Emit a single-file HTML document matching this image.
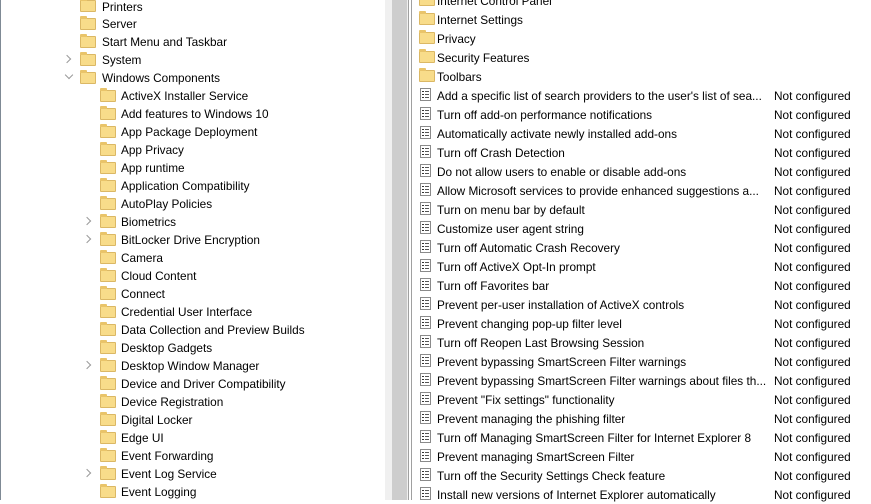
<!DOCTYPE html>
<html><head><meta charset="utf-8"><style>
body{margin:0;width:871px;height:500px;overflow:hidden;background:#fff;font-family:"Liberation Sans",sans-serif;font-size:11.8px;color:#000;position:relative}
.r{position:absolute;height:18px;line-height:18px;white-space:nowrap;margin-top:1px}
.f{position:absolute;width:16px;height:12px;background:#f8dc8a;border:1px solid #dbb865;box-sizing:border-box;border-radius:1px}
.f:before{content:"";position:absolute;left:-1px;top:-3px;width:7px;height:3px;background:#e9c46a;border-radius:1px 1px 0 0}
.d{position:absolute;width:11px;height:13px;border:1px solid #8a8a8a;box-sizing:border-box;background:#fff}
.d:before{content:"";position:absolute;left:1px;top:2px;width:2px;height:7px;background:repeating-linear-gradient(#333 0 1px,transparent 1px 3px)}
.d:after{content:"";position:absolute;left:4px;top:2px;width:4px;height:7px;background:repeating-linear-gradient(#555 0 1px,transparent 1px 3px)}
.c{position:absolute;width:5px;height:5px;border-right:1px solid #9a9a9a;border-bottom:1px solid #9a9a9a}
.s{position:absolute;left:774px}
</style></head><body>
<div style="position:absolute;left:0;top:0;width:1px;height:500px;background:#7f8a95"></div>
<div style="position:absolute;left:385px;top:0;width:23px;height:500px;background:#f0f0f0"></div>
<div style="position:absolute;left:392px;top:0;width:15px;height:500px;background:#cdcdcd"></div>
<div style="position:absolute;left:408px;top:0;width:1px;height:500px;background:#a0a0a0"></div>
<div style="position:absolute;left:411px;top:0;width:1px;height:500px;background:#a0a0a0"></div>

<div class="f" style="left:80px;top:0px"></div><div class="r" style="left:102px;top:-3px">Printers</div>
<div class="f" style="left:80px;top:18px"></div><div class="r" style="left:102px;top:14px">Server</div>
<div class="f" style="left:80px;top:36px"></div><div class="r" style="left:102px;top:32px">Start Menu and Taskbar</div>
<div class="c" style="left:64px;top:56px;transform:rotate(-45deg)"></div>
<div class="f" style="left:80px;top:54px"></div><div class="r" style="left:102px;top:50px">System</div>
<div class="c" style="left:66px;top:72px;transform:rotate(45deg)"></div>
<div class="f" style="left:80px;top:72px"></div><div class="r" style="left:102px;top:68px">Windows Components</div>

<div class="f" style="left:100px;top:90px"></div><div class="r" style="left:121px;top:86px">ActiveX Installer Service</div>
<div class="f" style="left:100px;top:108px"></div><div class="r" style="left:121px;top:104px">Add features to Windows 10</div>
<div class="f" style="left:100px;top:126px"></div><div class="r" style="left:121px;top:122px">App Package Deployment</div>
<div class="f" style="left:100px;top:144px"></div><div class="r" style="left:121px;top:140px">App Privacy</div>
<div class="f" style="left:100px;top:162px"></div><div class="r" style="left:121px;top:158px">App runtime</div>
<div class="f" style="left:100px;top:180px"></div><div class="r" style="left:121px;top:176px">Application Compatibility</div>
<div class="f" style="left:100px;top:198px"></div><div class="r" style="left:121px;top:194px">AutoPlay Policies</div>
<div class="c" style="left:84px;top:218px;transform:rotate(-45deg)"></div>
<div class="f" style="left:100px;top:216px"></div><div class="r" style="left:121px;top:212px">Biometrics</div>
<div class="c" style="left:84px;top:236px;transform:rotate(-45deg)"></div>
<div class="f" style="left:100px;top:234px"></div><div class="r" style="left:121px;top:230px">BitLocker Drive Encryption</div>
<div class="f" style="left:100px;top:252px"></div><div class="r" style="left:121px;top:248px">Camera</div>
<div class="f" style="left:100px;top:270px"></div><div class="r" style="left:121px;top:266px">Cloud Content</div>
<div class="f" style="left:100px;top:288px"></div><div class="r" style="left:121px;top:284px">Connect</div>
<div class="f" style="left:100px;top:306px"></div><div class="r" style="left:121px;top:302px">Credential User Interface</div>
<div class="f" style="left:100px;top:324px"></div><div class="r" style="left:121px;top:320px">Data Collection and Preview Builds</div>
<div class="f" style="left:100px;top:342px"></div><div class="r" style="left:121px;top:338px">Desktop Gadgets</div>
<div class="c" style="left:84px;top:362px;transform:rotate(-45deg)"></div>
<div class="f" style="left:100px;top:360px"></div><div class="r" style="left:121px;top:356px">Desktop Window Manager</div>
<div class="f" style="left:100px;top:378px"></div><div class="r" style="left:121px;top:374px">Device and Driver Compatibility</div>
<div class="f" style="left:100px;top:396px"></div><div class="r" style="left:121px;top:392px">Device Registration</div>
<div class="f" style="left:100px;top:414px"></div><div class="r" style="left:121px;top:410px">Digital Locker</div>
<div class="f" style="left:100px;top:432px"></div><div class="r" style="left:121px;top:428px">Edge UI</div>
<div class="f" style="left:100px;top:450px"></div><div class="r" style="left:121px;top:446px">Event Forwarding</div>
<div class="c" style="left:84px;top:470px;transform:rotate(-45deg)"></div>
<div class="f" style="left:100px;top:468px"></div><div class="r" style="left:121px;top:464px">Event Log Service</div>
<div class="f" style="left:100px;top:486px"></div><div class="r" style="left:121px;top:482px">Event Logging</div>

<div class="f" style="left:419px;top:-6px"></div><div class="r" style="left:437px;top:-9px">Internet Control Panel</div>
<div class="f" style="left:419px;top:13px"></div><div class="r" style="left:437px;top:10px">Internet Settings</div>
<div class="f" style="left:419px;top:32px"></div><div class="r" style="left:437px;top:29px">Privacy</div>
<div class="f" style="left:419px;top:51px"></div><div class="r" style="left:437px;top:48px">Security Features</div>
<div class="f" style="left:419px;top:70px"></div><div class="r" style="left:437px;top:67px">Toolbars</div>

<div class="d" style="left:420px;top:88px"></div><div class="r" style="left:437px;top:86px">Add a specific list of search providers to the user's list of sea...</div><div class="r s" style="top:86px">Not configured</div>
<div class="d" style="left:420px;top:107px"></div><div class="r" style="left:437px;top:105px">Turn off add-on performance notifications</div><div class="r s" style="top:105px">Not configured</div>
<div class="d" style="left:420px;top:126px"></div><div class="r" style="left:437px;top:124px">Automatically activate newly installed add-ons</div><div class="r s" style="top:124px">Not configured</div>
<div class="d" style="left:420px;top:145px"></div><div class="r" style="left:437px;top:143px">Turn off Crash Detection</div><div class="r s" style="top:143px">Not configured</div>
<div class="d" style="left:420px;top:164px"></div><div class="r" style="left:437px;top:162px">Do not allow users to enable or disable add-ons</div><div class="r s" style="top:162px">Not configured</div>
<div class="d" style="left:420px;top:183px"></div><div class="r" style="left:437px;top:181px">Allow Microsoft services to provide enhanced suggestions a...</div><div class="r s" style="top:181px">Not configured</div>
<div class="d" style="left:420px;top:202px"></div><div class="r" style="left:437px;top:200px">Turn on menu bar by default</div><div class="r s" style="top:200px">Not configured</div>
<div class="d" style="left:420px;top:221px"></div><div class="r" style="left:437px;top:219px">Customize user agent string</div><div class="r s" style="top:219px">Not configured</div>
<div class="d" style="left:420px;top:240px"></div><div class="r" style="left:437px;top:238px">Turn off Automatic Crash Recovery</div><div class="r s" style="top:238px">Not configured</div>
<div class="d" style="left:420px;top:259px"></div><div class="r" style="left:437px;top:257px">Turn off ActiveX Opt-In prompt</div><div class="r s" style="top:257px">Not configured</div>
<div class="d" style="left:420px;top:278px"></div><div class="r" style="left:437px;top:276px">Turn off Favorites bar</div><div class="r s" style="top:276px">Not configured</div>
<div class="d" style="left:420px;top:297px"></div><div class="r" style="left:437px;top:295px">Prevent per-user installation of ActiveX controls</div><div class="r s" style="top:295px">Not configured</div>
<div class="d" style="left:420px;top:316px"></div><div class="r" style="left:437px;top:314px">Prevent changing pop-up filter level</div><div class="r s" style="top:314px">Not configured</div>
<div class="d" style="left:420px;top:335px"></div><div class="r" style="left:437px;top:333px">Turn off Reopen Last Browsing Session</div><div class="r s" style="top:333px">Not configured</div>
<div class="d" style="left:420px;top:354px"></div><div class="r" style="left:437px;top:352px">Prevent bypassing SmartScreen Filter warnings</div><div class="r s" style="top:352px">Not configured</div>
<div class="d" style="left:420px;top:373px"></div><div class="r" style="left:437px;top:371px">Prevent bypassing SmartScreen Filter warnings about files th...</div><div class="r s" style="top:371px">Not configured</div>
<div class="d" style="left:420px;top:392px"></div><div class="r" style="left:437px;top:390px">Prevent "Fix settings" functionality</div><div class="r s" style="top:390px">Not configured</div>
<div class="d" style="left:420px;top:411px"></div><div class="r" style="left:437px;top:409px">Prevent managing the phishing filter</div><div class="r s" style="top:409px">Not configured</div>
<div class="d" style="left:420px;top:430px"></div><div class="r" style="left:437px;top:428px">Turn off Managing SmartScreen Filter for Internet Explorer 8</div><div class="r s" style="top:428px">Not configured</div>
<div class="d" style="left:420px;top:449px"></div><div class="r" style="left:437px;top:447px">Prevent managing SmartScreen Filter</div><div class="r s" style="top:447px">Not configured</div>
<div class="d" style="left:420px;top:468px"></div><div class="r" style="left:437px;top:466px">Turn off the Security Settings Check feature</div><div class="r s" style="top:466px">Not configured</div>
<div class="d" style="left:420px;top:487px"></div><div class="r" style="left:437px;top:485px">Install new versions of Internet Explorer automatically</div><div class="r s" style="top:485px">Not configured</div>
</body></html>
